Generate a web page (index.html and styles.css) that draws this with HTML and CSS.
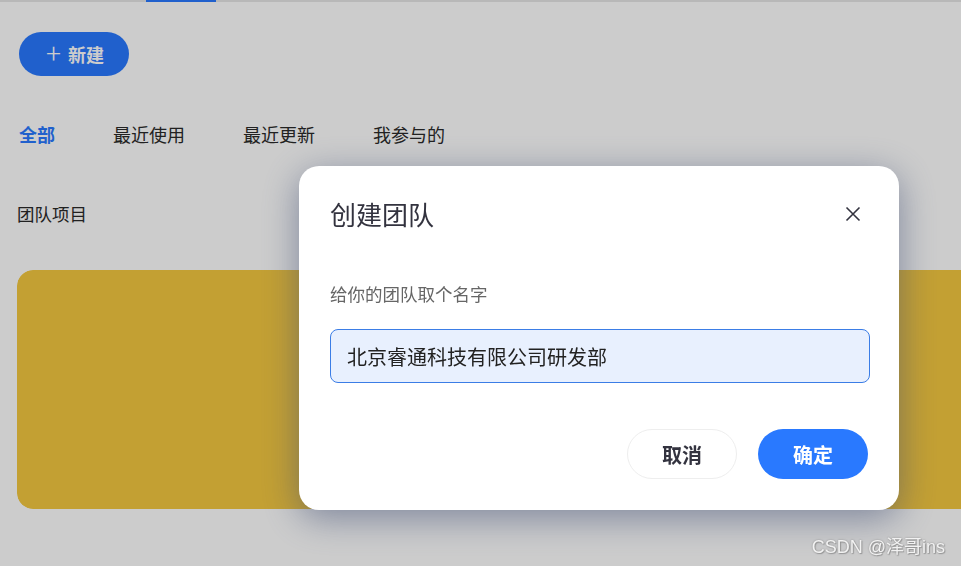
FILE: index.html
```html
<!DOCTYPE html>
<html lang="zh-CN">
<head>
<meta charset="utf-8">
<title>创建团队</title>
<link rel="stylesheet" href="styles.css">
</head>
<body>
<div class="page">
  <div class="topbar"><span class="topbar-active"></span></div>
  <div class="content">
    <button class="new-btn"><span class="plus">+</span>新建</button>
    <nav class="tabs">
      <span class="tab active">全部</span>
      <span class="tab">最近使用</span>
      <span class="tab">最近更新</span>
      <span class="tab">我参与的</span>
    </nav>
    <h2 class="section-title">团队项目</h2>
    <div class="card-row"><div class="card"></div></div>
  </div>
</div>
<div class="mask"></div>
<div class="modal">
  <div class="modal-head">
    <h3 class="modal-title">创建团队</h3>
    <svg class="close" width="16" height="16" viewBox="0 0 16 16"><path d="M1.5 1.5 L14.5 14.5 M14.5 1.5 L1.5 14.5" stroke="#33333f" stroke-width="1.6" fill="none"/></svg>
  </div>
  <div class="label">给你的团队取个名字</div>
  <div class="input">北京睿通科技有限公司研发部</div>
  <div class="actions">
    <button class="btn btn-cancel">取消</button>
    <button class="btn btn-ok">确定</button>
  </div>
</div>
<div class="watermark">CSDN @泽哥ins</div>
</body>
</html>
```
FILE: styles.css
```css
* { box-sizing: border-box; }
html, body { margin: 0; padding: 0; }
body {
  width: 961px;
  height: 566px;
  overflow: hidden;
  background: #fff;
  font-family: "Noto Sans CJK SC", "Noto Sans", sans-serif;
  color: #222;
}
.page { position: relative; height: 566px; overflow: hidden; }
.topbar {
  height: 2px;
  background: #e6e6e6;
  display: flex;
  padding-left: 146px;
}
.topbar-active { width: 70px; height: 2px; background: #2979ff; }
.content { padding: 30px 0 0 17px; }
.new-btn {
  margin-left: 2px;
  width: 110px;
  height: 44px;
  border: none;
  border-radius: 22px;
  background: #2979ff;
  color: #fff;
  font-family: inherit;
  font-size: 18px;
  font-weight: 700;
  display: flex;
  align-items: center;
  justify-content: center;
  gap: 7px;
  padding: 0 0 0 2px;
}
.plus { font-weight: 200; font-size: 28px; line-height: 1; margin-top: -4px; }
.tabs {
  display: flex;
  gap: 58px;
  margin-top: 44px;
  padding-left: 2px;
  font-size: 18px;
  line-height: 28px;
  color: #2a2a2a;
}
.tab.active { color: #2979ff; font-weight: 700; }
.section-title {
  margin: 52px 0 0;
  font-size: 17.5px;
  font-weight: 400;
  line-height: 28px;
  color: #2a2a2a;
}
.card-row { margin-top: 42px; overflow: hidden; border-radius: 16px 0 0 16px; }
.card {
  width: 1000px;
  height: 239px;
  background: #f4c840;
  border-radius: 16px;
}
.mask {
  position: fixed;
  inset: 0;
  background: rgba(0, 0, 0, 0.2);
}
.modal {
  position: fixed;
  left: 299px;
  top: 166px;
  width: 600px;
  height: 344px;
  background: #fff;
  border-radius: 20px;
  box-shadow: 0 8px 36px rgba(60, 75, 115, 0.55);
  padding: 32px 31px 32px 31px;
  display: flex;
  flex-direction: column;
}
.modal-head {
  display: flex;
  align-items: center;
  justify-content: space-between;
  height: 32px;
  flex-shrink: 0;
}
.modal-title {
  margin: 0;
  font-size: 26px;
  font-weight: 400;
  line-height: 32px;
  color: #33333f;
}
.close { margin-right: 7px; }
.label {
  margin-top: 53px;
  font-size: 17.5px;
  line-height: 22px;
  color: #666;
  flex-shrink: 0;
}
.input {
  margin-top: 24px;
  width: 540px;
  height: 54px;
  flex-shrink: 0;
  border: 1px solid #3b7de6;
  border-radius: 8px;
  background: #e8f0fe;
  padding: 0 16px;
  display: flex;
  align-items: center;
  font-size: 20px;
  color: #222;
}
.actions {
  margin-top: 46px;
  display: flex;
  justify-content: flex-end;
  gap: 21px;
  flex-shrink: 0;
}
.btn {
  width: 110px;
  height: 50px;
  border-radius: 25px;
  font-family: inherit;
  font-size: 20px;
  font-weight: 700;
  padding: 0;
}
.btn-cancel { background: #fff; border: 1px solid #eeeeee; color: #33333f; }
.btn-ok { background: #2979ff; border: none; color: #fff; }
.watermark {
  position: fixed;
  right: 16px;
  bottom: 8px;
  font-family: "Liberation Sans", "Noto Sans CJK SC", sans-serif;
  font-size: 18px;
  color: #f2f2f2;
  text-shadow: 0 0 2px #888, 1px 1px 1px #999;
}
```
